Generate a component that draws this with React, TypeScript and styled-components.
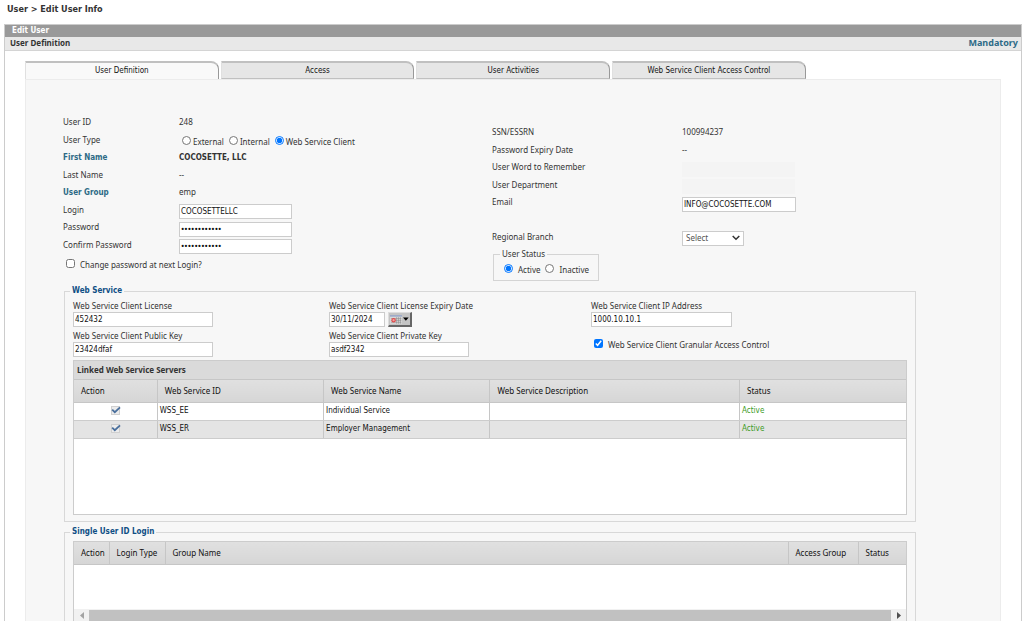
import React, { useState } from "react";
import styled, { createGlobalStyle, css } from "styled-components";

const sans = `"Noto Sans", "DejaVu Sans Condensed", sans-serif`;
const compact = `"DejaVu Sans Condensed", "Noto Sans", sans-serif`;

const GlobalStyle = createGlobalStyle`
  * { box-sizing: border-box; }
  html, body { margin: 0; background: #fff; }
  body, button, input, select {
    font-family: ${sans};
    font-size: 8px;
    line-height: 12px;
    color: #333;
  }
`;

const Page = styled.div`
  height: 100vh;
  overflow: hidden;
  display: flex;
  flex-direction: column;
  padding: 0 2px 0 4px;
`;

const Breadcrumb = styled.h1`
  margin: 0;
  padding: 3px 3px 9px;
  font-family: ${compact};
  font-size: 9px;
  line-height: 12px;
  font-weight: bold;
`;

const Shell = styled.main`
  flex: 1 0 auto;
  border: 1px solid #ccc;
  border-bottom: 0;
`;

const TitleBar = styled.h2`
  margin: 0;
  padding: 0 7px;
  background: #999;
  color: #fff;
  font-family: ${compact};
  font-size: 8px;
  line-height: 12px;
`;

const SubBar = styled.div`
  display: flex;
  justify-content: space-between;
  align-items: center;
  height: 14px;
  padding: 0 3px 1px 5px;
  background: #e8e8e8;
  border-bottom: 1px solid #d4d4d4;
  font-weight: bold;
`;

const Mandatory = styled.span`
  font-size: 9px;
  color: #2d6a86;
`;

const Content = styled.div`
  padding: 10px 20px 0;
`;

const Tabs = styled.div`
  display: grid;
  grid-template-columns: repeat(4, 1fr);
  gap: 2px;
  width: 80%;
`;

const Tab = styled.button<{ $active?: boolean }>`
  height: 18px;
  padding: 0 0 1px;
  border: solid #c0c0c0;
  border-width: 2px 1px 0;
  border-left-color: #e0e0e0;
  border-right-color: #999;
  border-top-right-radius: 8px;
  background: #f9f9f9;
  font-family: ${compact};
  color: #111;
  ${(p) =>
    !p.$active &&
    css`
      padding-bottom: 0;
      background: #e6e6e6;
      border-bottom: 1px solid #c0c0c0;
    `}
`;

const Panel = styled.section`
  padding: 34px 84px 0 37px;
  background: #f7f7f7;
  border: 1px solid #ececec;
  border-bottom: 0;
`;

const FormColumns = styled.div`
  display: grid;
  grid-template-columns: 1fr 1fr;
  column-gap: 5px;
  height: 171px;
`;

const FormColumn = styled.div<{ $lowered?: boolean }>`
  padding-top: ${(p) => (p.$lowered ? 10 : 0)}px;
`;

const Rows = styled.div<{ $label: number }>`
  display: grid;
  grid-template-columns: ${(p) => p.$label}px 1fr;
  grid-auto-rows: 18px 17px;
  align-items: center;
`;

const Label = styled.label<{ $required?: boolean }>`
  ${Rows} > & {
    padding-bottom: ${(p) => (p.$required ? 0 : 2)}px;
  }
  ${(p) =>
    p.$required &&
    css`
      font-family: ${compact};
      font-weight: bold;
      color: #2d6a86;
    `}
`;

const Value = styled.span<{ $strong?: boolean }>`
  padding-bottom: 2px;
  ${(p) =>
    p.$strong &&
    css`
      padding-bottom: 0;
      font-family: ${compact};
      font-weight: bold;
    `}
`;

const TextInput = styled.input<{ $width: number }>`
  width: ${(p) => p.$width}px;
  height: 15px;
  padding: 0 1px;
  border: 1px solid #ccc;
  background: #fff;
  color: #111;
  font-family: ${compact};
  &:disabled {
    border-color: transparent;
    background: #f4f4f4;
  }
  &[type="password"] {
    font-family: Roboto, sans-serif;
    font-size: 10px;
  }
  ${Rows} > & {
    align-self: end;
  }
`;

const Choices = styled.div`
  display: flex;
  align-items: center;
  gap: 5px;
  padding: 3px 0 0 3px;
`;

const Choice = styled.label<{ $gap?: number }>`
  display: flex;
  align-items: center;
  gap: ${(p) => p.$gap ?? 2}px;
`;

const Toggle = styled.input`
  width: 9px;
  height: 9px;
  margin: 0 0 3px;
  accent-color: #0075ff;
`;

const PasswordChange = styled.div`
  display: flex;
  padding: 5px 0 0 3px;
`;

const SelectWrap = styled.div`
  display: grid;
  width: 62px;
  height: 15px;
  align-items: center;
  & > * {
    grid-area: 1 / 1;
  }
  & > svg {
    justify-self: end;
    margin-right: 4px;
    pointer-events: none;
  }
`;

const Select = styled.select`
  appearance: none;
  width: 100%;
  height: 15px;
  padding: 0 3px;
  border: 1px solid #ccc;
  border-radius: 0;
  background: #fff;
  color: #555;
`;

const StatusGroup = styled.fieldset`
  width: 106px;
  height: 33px;
  margin: 1px 0 0 1px;
  padding: 1px 7px 0;
  border: 1px solid #d4d4d4;
  & > legend {
    padding: 0 2px;
    margin-left: -1px;
  }
`;

const Group = styled.fieldset`
  margin: 0 0 4px 1px;
  padding: 0 8px 6px;
  min-width: 0;
  border: 1px solid #d8d8d8;
  & > legend {
    margin-left: -3px;
    padding: 0 2px;
    font-family: ${compact};
    font-weight: bold;
    color: #0f4f85;
  }
`;

const ServiceFields = styled.div`
  display: grid;
  grid-template-columns: 256fr 262fr 316fr;
  row-gap: 3px;
  padding: 3px 0;
`;

const Field = styled.div`
  display: flex;
  flex-direction: column;
  align-items: flex-start;
`;

const DateRow = styled.div`
  display: flex;
  gap: 3px;
`;

const CalendarButton = styled.button`
  display: flex;
  align-items: center;
  gap: 1px;
  width: 24px;
  height: 15px;
  padding: 0 1px;
  background: #c4c4c4;
  border: solid;
  border-width: 1px 2px 2px 1px;
  border-color: #ddd #666 #666 #ddd;
`;

const CheckField = styled.div`
  display: flex;
  align-items: center;
  padding: 2px 0 0 3px;
`;

const GridBox = styled.div<{ $height: number; $top?: number }>`
  display: flex;
  flex-direction: column;
  height: ${(p) => p.$height}px;
  margin-top: ${(p) => p.$top ?? 0}px;
  border: 1px solid #ccc;
  background: #fff;
`;

const Table = styled.table`
  width: 100%;
  table-layout: fixed;
  border-collapse: collapse;
  color: #111;
  & caption {
    height: 19px;
    padding: 0 3px;
    text-align: left;
    font-weight: bold;
    line-height: 18px;
    color: #333;
    background: #dadada;
    border-bottom: 1px solid #c6c6c6;
  }
  & th {
    height: 22px;
    padding: 0 7px;
    text-align: left;
    font-weight: normal;
    white-space: nowrap;
    background: linear-gradient(#e0e0e0, #d6d6d6);
    border-bottom: 1px solid #c6c6c6;
  }
  & td {
    height: 18px;
    padding: 0 2px;
    font-family: ${compact};
    border-bottom: 1px solid #ccc;
  }
  & th + th,
  & td + td {
    border-left: 1px solid #c6c6c6;
  }
  & tbody tr:nth-child(even) {
    background: #e4e4e4;
  }
`;

const Status = styled.td`
  && {
    color: #3a9a1c;
  }
`;

const RowCheck = styled.label`
  display: grid;
  width: 9px;
  height: 11px;
  margin: 0 auto;
  & > * {
    grid-area: 1 / 1;
  }
  & > svg {
    overflow: visible;
  }
`;

const RowCheckInput = styled.input`
  appearance: none;
  width: 9px;
  height: 9px;
  margin: 0;
  border: 1px solid #d0d0d0;
  background: #ececec;
`;

const ScrollTrack = styled.div`
  display: flex;
  align-items: center;
  height: 13px;
  margin-top: auto;
  background: #f1f1f1;
`;

const ScrollButton = styled.button`
  display: flex;
  align-items: center;
  justify-content: center;
  width: 15px;
  height: 13px;
  padding: 0;
  border: 0;
  background: #f1f1f1;
`;

const ScrollThumb = styled.div`
  flex: 1;
  height: 12px;
  background: #c1c1c1;
`;

const tabs = ["User Definition", "Access", "User Activities", "Web Service Client Access Control"];
const userTypes = ["External", "Internal", "Web Service Client"];
const servers = [
  { id: "WSS_EE", name: "Individual Service", description: "", status: "Active" },
  { id: "WSS_ER", name: "Employer Management", description: "", status: "Active" },
];

export default function App() {
  const [tab, setTab] = useState(0);
  return (
    <>
      <GlobalStyle />
      <Page>
        <Breadcrumb>User &gt; Edit User Info</Breadcrumb>
        <Shell>
          <TitleBar>Edit User</TitleBar>
          <SubBar>
            <span>User Definition</span>
            <Mandatory>Mandatory</Mandatory>
          </SubBar>
          <Content>
            <Tabs role="tablist">
              {tabs.map((name, i) => (
                <Tab key={name} role="tab" aria-selected={i === tab} $active={i === tab} onClick={() => setTab(i)}>
                  {name}
                </Tab>
              ))}
            </Tabs>
            <Panel>
              <FormColumns>
                <FormColumn>
                  <Rows $label={116}>
                    <Value>User ID</Value>
                    <Value>248</Value>
                    <Value id="type">User Type</Value>
                    <Choices role="radiogroup" aria-labelledby="type">
                      {userTypes.map((name, i) => (
                        <Choice key={name}>
                          <Toggle type="radio" name="userType" defaultChecked={i === 2} />
                          {name}
                        </Choice>
                      ))}
                    </Choices>
                    <Label as="span" $required>First Name</Label>
                    <Value $strong>COCOSETTE, LLC</Value>
                    <Value>Last Name</Value>
                    <Value>--</Value>
                    <Label as="span" $required>User Group</Label>
                    <Value>emp</Value>
                    <Label htmlFor="login">Login</Label>
                    <TextInput id="login" $width={113} defaultValue="COCOSETTELLC" />
                    <Label htmlFor="password">Password</Label>
                    <TextInput id="password" type="password" $width={113} defaultValue="abcdefghijkl" />
                    <Label htmlFor="confirm">Confirm Password</Label>
                    <TextInput id="confirm" type="password" $width={113} defaultValue="abcdefghijkl" />
                  </Rows>
                  <PasswordChange>
                    <Choice $gap={5}>
                      <Toggle type="checkbox" />
                      Change password at next Login?
                    </Choice>
                  </PasswordChange>
                </FormColumn>
                <FormColumn $lowered>
                  <Rows $label={190}>
                    <Value>SSN/ESSRN</Value>
                    <Value>100994237</Value>
                    <Value>Password Expiry Date</Value>
                    <Value>--</Value>
                    <Label htmlFor="word">User Word to Remember</Label>
                    <TextInput id="word" $width={113} disabled />
                    <Label htmlFor="department">User Department</Label>
                    <TextInput id="department" $width={113} disabled />
                    <Label htmlFor="email">Email</Label>
                    <TextInput id="email" $width={114} defaultValue="INFO@COCOSETTE.COM" />
                    <span />
                    <span />
                    <Label htmlFor="branch">Regional Branch</Label>
                    <SelectWrap>
                      <Select id="branch">
                        <option>Select</option>
                      </Select>
                      <svg width="8" height="6" viewBox="0 0 8 6" fill="none" stroke="#333" strokeWidth="1.5">
                        <path d="M0.7 1 L4 4.3 L7.3 1" />
                      </svg>
                    </SelectWrap>
                  </Rows>
                  <StatusGroup>
                    <legend>User Status</legend>
                    <Choices>
                      <Choice $gap={5}>
                        <Toggle type="radio" name="status" defaultChecked />
                        Active
                      </Choice>
                      <Choice $gap={5}>
                        <Toggle type="radio" name="status" />
                        Inactive
                      </Choice>
                    </Choices>
                  </StatusGroup>
                </FormColumn>
              </FormColumns>

              <Group>
                <legend>Web Service</legend>
                <ServiceFields>
                  <Field>
                    <Label htmlFor="license">Web Service Client License</Label>
                    <TextInput id="license" $width={140} defaultValue="452432" />
                  </Field>
                  <Field>
                    <Label htmlFor="expiry">Web Service Client License Expiry Date</Label>
                    <DateRow>
                      <TextInput id="expiry" $width={56} defaultValue="30/11/2024" />
                      <CalendarButton aria-label="Pick a date">
                        <svg width="13" height="9" viewBox="0 0 13 9">
                          <rect width="13" height="9" fill="#d8d8d8" />
                          <rect width="13" height="1.4" fill="#8e9fc4" />
                          <path d="M1 3.5h11M1 5.5h11M1 7.5h11M7 2v7M9 2v7M11 2v7" stroke="#8a8a8a" strokeWidth="0.6" />
                          <circle cx="3.8" cy="5.2" r="1.8" fill="#f0a0a0" stroke="#e04a4a" strokeWidth="1.2" />
                        </svg>
                        <svg width="6" height="4" viewBox="0 0 6 4">
                          <path d="M0 0.5h6L3 3.8z" fill="#000" />
                        </svg>
                      </CalendarButton>
                    </DateRow>
                  </Field>
                  <Field>
                    <Label htmlFor="ip">Web Service Client IP Address</Label>
                    <TextInput id="ip" $width={141} defaultValue="1000.10.10.1" />
                  </Field>
                  <Field>
                    <Label htmlFor="publicKey">Web Service Client Public Key</Label>
                    <TextInput id="publicKey" $width={140} defaultValue="23424dfaf" />
                  </Field>
                  <Field>
                    <Label htmlFor="privateKey">Web Service Client Private Key</Label>
                    <TextInput id="privateKey" $width={140} defaultValue="asdf2342" />
                  </Field>
                  <CheckField>
                    <Choice $gap={5}>
                      <Toggle type="checkbox" defaultChecked />
                      Web Service Client Granular Access Control
                    </Choice>
                  </CheckField>
                </ServiceFields>
                <GridBox $height={155}>
                  <Table>
                    <caption>Linked Web Service Servers</caption>
                    <colgroup>
                      <col width="10%" />
                      <col width="20%" />
                      <col width="20%" />
                      <col width="30%" />
                      <col width="20%" />
                    </colgroup>
                    <thead>
                      <tr>
                        <th>Action</th>
                        <th>Web Service ID</th>
                        <th>Web Service Name</th>
                        <th>Web Service Description</th>
                        <th>Status</th>
                      </tr>
                    </thead>
                    <tbody>
                      {servers.map((s) => (
                        <tr key={s.id}>
                          <td>
                            <RowCheck>
                              <RowCheckInput type="checkbox" aria-label={s.name} defaultChecked disabled />
                              <svg width="9" height="9" viewBox="0 0 9 9" fill="none" stroke="#4a6f9c" strokeWidth="1.8">
                                <path d="M1.2 3.6 L3.8 6.2 L9 1.4" />
                              </svg>
                            </RowCheck>
                          </td>
                          <td>{s.id}</td>
                          <td>{s.name}</td>
                          <td>{s.description}</td>
                          <Status>{s.status}</Status>
                        </tr>
                      ))}
                    </tbody>
                  </Table>
                </GridBox>
              </Group>

              <Group>
                <legend>Single User ID Login</legend>
                <GridBox $height={82} $top={3}>
                  <Table>
                    <colgroup>
                      <col width="35" />
                      <col width="56" />
                      <col />
                      <col width="70" />
                      <col width="48" />
                    </colgroup>
                    <thead>
                      <tr>
                        <th>Action</th>
                        <th>Login Type</th>
                        <th>Group Name</th>
                        <th>Access Group</th>
                        <th>Status</th>
                      </tr>
                    </thead>
                  </Table>
                  <ScrollTrack>
                    <ScrollButton aria-label="Scroll left">
                      <svg width="4" height="7" viewBox="0 0 4 7">
                        <path d="M4 0v7L0 3.5z" fill="#a3a3a3" />
                      </svg>
                    </ScrollButton>
                    <ScrollThumb />
                    <ScrollButton aria-label="Scroll right">
                      <svg width="4" height="7" viewBox="0 0 4 7">
                        <path d="M0 0v7L4 3.5z" fill="#505050" />
                      </svg>
                    </ScrollButton>
                  </ScrollTrack>
                </GridBox>
              </Group>
            </Panel>
          </Content>
        </Shell>
      </Page>
    </>
  );
}
